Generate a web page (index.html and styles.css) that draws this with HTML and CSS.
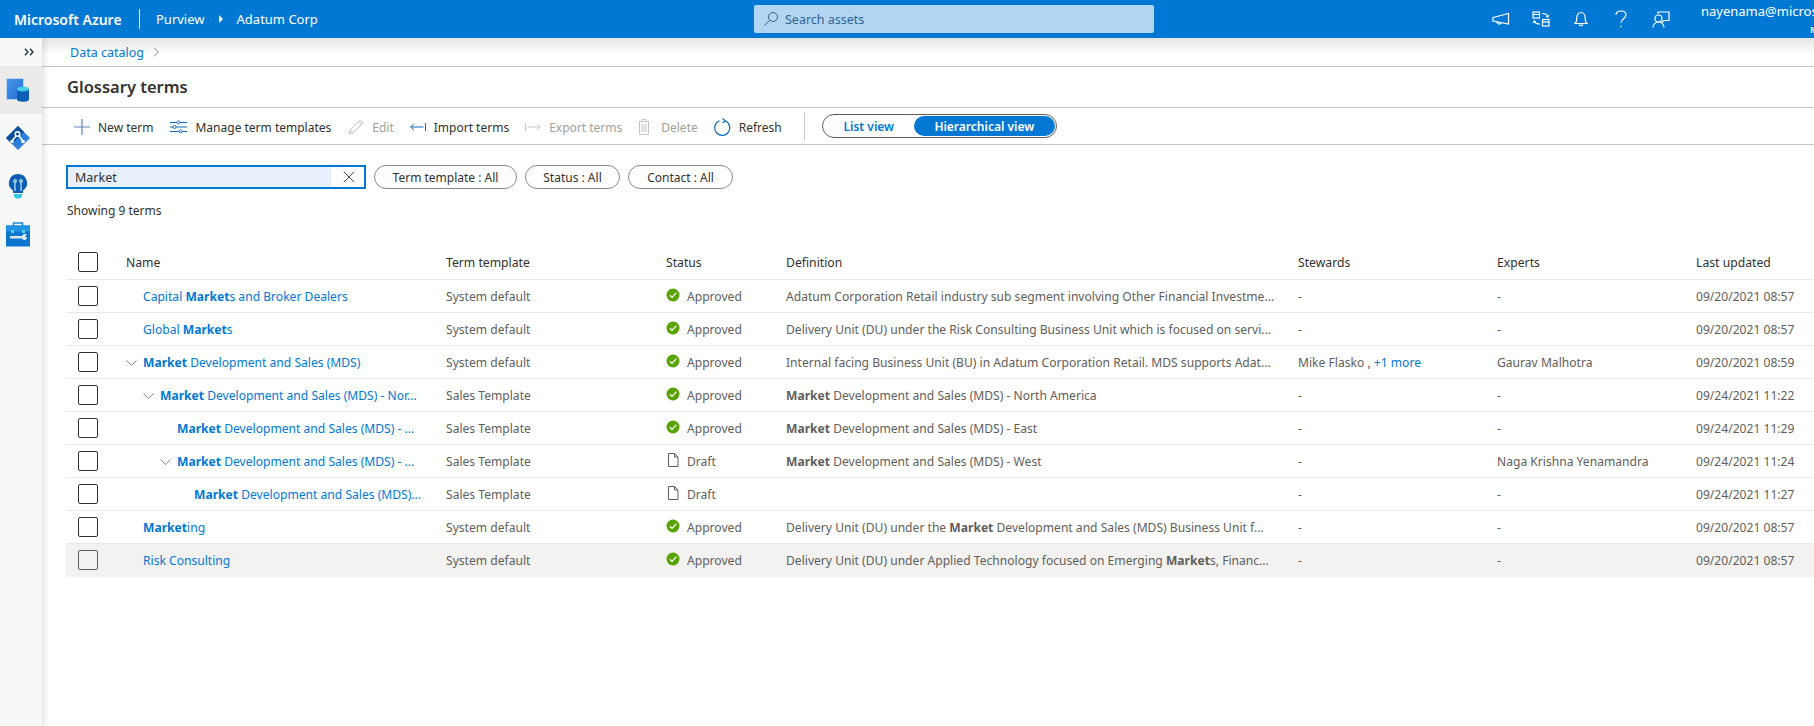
FILE: index.html
```html
<!DOCTYPE html>
<html lang="en">
<head>
<meta charset="utf-8">
<title>Glossary terms</title>
<link rel="stylesheet" href="styles.css">
</head>
<body>
<header class="topbar">
  <div class="top-left">
    <span class="brand">Microsoft Azure</span>
    <span class="brand-sep"></span>
    <span class="top-crumb">Purview</span>
    <svg class="top-caret" width="6" height="10" viewBox="0 0 6 10"><path d="M1 1l4 4-4 4z" fill="#fff"/></svg>
    <span class="top-crumb">Adatum Corp</span>
  </div>
  <div class="top-search">
    <svg width="16" height="16" viewBox="0 0 16 16" fill="none" stroke="#3d5f7d" stroke-width="1"><circle cx="10" cy="6" r="4.5"/><path d="M6.7 9.3L1.5 14.5"/></svg>
    <span>Search assets</span>
  </div>
  <div class="top-right">
    <span class="top-icon"><svg width="18" height="14" viewBox="0 0 18 14" fill="none" stroke="#fff" stroke-width="1.2"><path d="M1 5.5L16.5 1.5V12L1 9z"/><path d="M5 10c0 2 3 3 4 1"/></svg></span>
    <span class="top-icon"><svg width="18" height="16" viewBox="0 0 18 16" fill="none" stroke="#fff" stroke-width="1.2"><rect x="1" y="1" width="6.5" height="6"/><path d="M1 3.5h6.5"/><rect x="10.5" y="8.5" width="6.5" height="6.5"/><path d="M10.5 11h6.5"/><path d="M10 2.5c3 0 5 .5 6 3M14 5.5l2 .6.6-2M8 13c-3 0-5-.5-6-3M4 10.500l-2-.6-.6 2"/></svg></span>
    <span class="top-icon"><svg width="14" height="16" viewBox="0 0 14 16" fill="none" stroke="#fff" stroke-width="1.2"><path d="M1 12.500h12c-1.500-1-1.800-2.500-1.800-5.500 0-3-1.800-5.500-4.200-5.500S2.800 4 2.800 7c0 3-.3 4.500-1.800 5.500z"/><path d="M5.200 13.500c.5 1.500 3.100 1.500 3.600 0"/></svg></span>
    <span class="top-icon"><svg width="12" height="18" viewBox="0 0 12 18" fill="none" stroke="#fff" stroke-width="1.2"><path d="M1 5c0-2.500 2-4 5-4s5 1.600 5 4c0 3.500-5 3.500-5 8"/><circle cx="6" cy="16.500" r=".8" fill="#fff" stroke="none"/></svg></span>
    <span class="top-icon"><svg width="18" height="17" viewBox="0 0 18 17" fill="none" stroke="#fff" stroke-width="1.2"><path d="M6 3V1h11v8.500h-5l-2 2"/><circle cx="6.500" cy="7.500" r="3.500"/><path d="M1 16.500c0-3 2.500-5.500 5.500-5.500s5.500 2.500 5.500 5.500"/></svg></span>
    <div class="user">
      <div class="user-name">nayenama@microsoft.com</div>
      <div class="user-org">MICROSOFT</div>
    </div>
  </div>
</header>
<div class="shell">
  <nav class="sidebar">
    <div class="expand"><svg width="10" height="8" viewBox="0 0 10 8" fill="none" stroke="#1c2b3a" stroke-width="1.3"><path d="M1 .7L4 4 1 7.300M6 .7L9 4 6 7.300"/></svg></div>
    <div class="nav-item nav-active">
      <svg width="24" height="24" viewBox="0 0 24 24"><defs><linearGradient id="bookfill" x1="0" y1="0" x2="1" y2="1"><stop offset="0" stop-color="#4a97ea"/><stop offset="1" stop-color="#1f6fd1"/></linearGradient></defs><rect x="0.500" y="0.500" width="17" height="21" fill="url(#bookfill)" stroke="#b9d5f2"/><path d="M11 11h12v10.500c0 3-12 3-12 0z" fill="#0c5fb5"/><ellipse cx="17" cy="11" rx="6" ry="2.500" fill="#43cfe8"/></svg>
    </div>
    <div class="nav-item">
      <svg width="24" height="24" viewBox="0 0 24 24"><path d="M12 0l12 12-12 12L0 12z" fill="#2d7fdc"/><path d="M12 0L0 12l6 6L18 6z" fill="#0f4f97"/><g fill="none" stroke="#fff" stroke-width="1.500"><circle cx="11.500" cy="8" r="2.300"/><path d="M10 10l-4 5M13 10l4 5"/></g><circle cx="6" cy="15.500" r="1.800" fill="#fff"/><circle cx="17" cy="15.500" r="1.800" fill="#fff"/></svg>
    </div>
    <div class="nav-item">
      <svg width="20" height="25" viewBox="0 0 20 25"><path d="M10 0a9 9 0 0 1 5 16.500V19H5v-2.500A9 9 0 0 1 10 0z" fill="#0c5fb5"/><path d="M6 20h8v2.500l-2 2H8l-2-2z" fill="#32c8e8"/><g stroke="#bfe6f7" stroke-width="1.200" fill="none"><path d="M7 8v9M13 8v9"/><circle cx="7" cy="7" r="1.300"/><circle cx="13" cy="7" r="1.300"/></g></svg>
    </div>
    <div class="nav-item">
      <svg width="24" height="25" viewBox="0 0 24 25"><path d="M7.500 4V1h9v3" fill="none" stroke="#1d86d8" stroke-width="1.600"/><rect y="3.500" width="24" height="21" fill="#0c76cf"/><rect y="3.500" width="24" height="6" fill="#1f93e0"/><rect x="5" y="8" width="3" height="3" fill="#4fd0ec"/><rect x="16" y="8" width="3" height="3" fill="#4fd0ec"/><path d="M4 14h12l1.500-2H21l-1.500 2 1.500 2-1.500 2h-2L16 16.500H4z" fill="#dfe7ee"/></svg>
    </div>
  </nav>
  <main class="main">
    <div class="crumbs"><a class="crumb-link">Data catalog</a><svg width="7" height="10" viewBox="0 0 7 10" fill="none" stroke="#8a8886"><path d="M1 .7L5.500 5 1 9.300"/></svg></div>
    <h1 class="page-title">Glossary terms</h1>
    <div class="toolbar">
      <button class="tool tool-wide"><svg width="16" height="16" viewBox="0 0 16 16" stroke="#5f83c4" stroke-width="1.200"><path d="M8 0v16M0 8h16"/></svg>New term</button>
      <button class="tool tool-wide"><svg width="17" height="14" viewBox="0 0 17 14" fill="none" stroke="#0f6cbd"><path d="M0 2.500h7M10 2.500h7M0 7h3M6 7h11M0 11.500h9M12 11.500h5"/><circle cx="8.500" cy="2.500" r="1.500"/><circle cx="4.500" cy="7" r="1.500"/><circle cx="10.500" cy="11.500" r="1.500"/></svg>Manage term templates</button>
      <button class="tool tool-off"><svg width="16" height="16" viewBox="0 0 16 16" fill="none" stroke="#c8c6c4"><path d="M1 15l1-4L12 1l3 3L5 14zM10.500 2.500l3 3M2 11l3 3"/></svg>Edit</button>
      <button class="tool"><svg width="16" height="8" viewBox="0 0 16 8" fill="none" stroke="#0f6cbd"><path d="M.5 4h13M4 .7L.7 4 4 7.300M15.500 0v8"/></svg>Import terms</button>
      <button class="tool tool-off"><svg width="16" height="8" viewBox="0 0 16 8" fill="none" stroke="#c8c6c4"><path d="M2.500 4h13M12 .7L15.300 4 12 7.300M.5 0v8"/></svg>Export terms</button>
      <button class="tool tool-off tool-delete"><svg width="12" height="16" viewBox="0 0 12 16" fill="none" stroke="#c8c6c4"><path d="M.5 2.500h11M4 2.500V.5h4v2M1.500 2.500v13h9v-13M4 5v8M6 5v8M8 5v8"/></svg>Delete</button>
      <button class="tool"><svg width="17" height="18" viewBox="0 0 17 18" fill="none" stroke="#0f6cbd" stroke-width="1.200"><path d="M11 2.800a7.500 7.500 0 1 1-5.500 0"/><path d="M8.500 .5L11.300 2.900 8.500 5"/></svg>Refresh</button>
      <span class="tool-sep"></span>
      <div class="view-toggle">
        <span class="view view-list">List view</span>
        <span class="view view-on">Hierarchical view</span>
      </div>
    </div>
    <div class="filters">
      <div class="searchbox"><span class="search-text">Market</span><svg width="12" height="12" viewBox="0 0 12 12" stroke="#4a4846"><path d="M.7.7l10.600 10.600M11.300.7L.7 11.300"/></svg></div>
      <button class="chip chip-term">Term template : All</button>
      <button class="chip chip-status">Status : All</button>
      <button class="chip chip-contact">Contact : All</button>
    </div>
    <p class="count">Showing 9 terms</p>
    <table class="grid">
      <colgroup><col class="c-check"><col class="c-name"><col class="c-tmpl"><col class="c-stat"><col class="c-def"><col class="c-stew"><col class="c-exp"><col class="c-upd"></colgroup>
      <thead>
        <tr><th><span class="box"></span></th><th>Name</th><th>Term template</th><th>Status</th><th>Definition</th><th>Stewards</th><th>Experts</th><th>Last updated</th></tr>
      </thead>
      <tbody>
        <tr><td><span class="box"></span></td><td><div class="tree"><span class="twist"></span><a class="term">Capital <b>Market</b>s and Broker Dealers</a></div></td><td>System default</td><td><div class="status"><svg class="st-icon" width="14" height="14" viewBox="0 0 14 14"><circle cx="7" cy="7" r="6.500" fill="#57a300"/><path d="M3.800 7.200l2.200 2.200 4.300-4.600" fill="none" stroke="#fff" stroke-width="1.300"/></svg>Approved</div></td><td>Adatum Corporation Retail industry sub segment involving Other Financial Investme...</td><td>-</td><td>-</td><td>09/20/2021 08:57</td></tr>
        <tr><td><span class="box"></span></td><td><div class="tree"><span class="twist"></span><a class="term">Global <b>Market</b>s</a></div></td><td>System default</td><td><div class="status"><svg class="st-icon" width="14" height="14" viewBox="0 0 14 14"><circle cx="7" cy="7" r="6.500" fill="#57a300"/><path d="M3.800 7.200l2.200 2.200 4.300-4.600" fill="none" stroke="#fff" stroke-width="1.300"/></svg>Approved</div></td><td>Delivery Unit (DU) under the Risk Consulting Business Unit which is focused on servi...</td><td>-</td><td>-</td><td>09/20/2021 08:57</td></tr>
        <tr><td><span class="box"></span></td><td><div class="tree"><span class="twist"><svg width="11" height="6" viewBox="0 0 11 6" fill="none" stroke="#8a8886"><path d="M.5.500l5 5 5-5"/></svg></span><a class="term"><b>Market</b> Development and Sales (MDS)</a></div></td><td>System default</td><td><div class="status"><svg class="st-icon" width="14" height="14" viewBox="0 0 14 14"><circle cx="7" cy="7" r="6.500" fill="#57a300"/><path d="M3.800 7.200l2.200 2.200 4.300-4.600" fill="none" stroke="#fff" stroke-width="1.300"/></svg>Approved</div></td><td>Internal facing Business Unit (BU) in Adatum Corporation Retail. MDS supports Adat...</td><td>Mike Flasko , <a class="more">+1 more</a></td><td>Gaurav Malhotra</td><td>09/20/2021 08:59</td></tr>
        <tr><td><span class="box"></span></td><td><div class="tree lvl1"><span class="twist"><svg width="11" height="6" viewBox="0 0 11 6" fill="none" stroke="#8a8886"><path d="M.5.500l5 5 5-5"/></svg></span><a class="term"><b>Market</b> Development and Sales (MDS) - Nor...</a></div></td><td>Sales Template</td><td><div class="status"><svg class="st-icon" width="14" height="14" viewBox="0 0 14 14"><circle cx="7" cy="7" r="6.500" fill="#57a300"/><path d="M3.800 7.200l2.200 2.200 4.300-4.600" fill="none" stroke="#fff" stroke-width="1.300"/></svg>Approved</div></td><td><b>Market</b> Development and Sales (MDS) - North America</td><td>-</td><td>-</td><td>09/24/2021 11:22</td></tr>
        <tr><td><span class="box"></span></td><td><div class="tree lvl2"><span class="twist"></span><a class="term"><b>Market</b> Development and Sales (MDS) - ...</a></div></td><td>Sales Template</td><td><div class="status"><svg class="st-icon" width="14" height="14" viewBox="0 0 14 14"><circle cx="7" cy="7" r="6.500" fill="#57a300"/><path d="M3.800 7.200l2.200 2.200 4.300-4.600" fill="none" stroke="#fff" stroke-width="1.300"/></svg>Approved</div></td><td><b>Market</b> Development and Sales (MDS) - East</td><td>-</td><td>-</td><td>09/24/2021 11:29</td></tr>
        <tr><td><span class="box"></span></td><td><div class="tree lvl2"><span class="twist"><svg width="11" height="6" viewBox="0 0 11 6" fill="none" stroke="#8a8886"><path d="M.5.500l5 5 5-5"/></svg></span><a class="term"><b>Market</b> Development and Sales (MDS) - ...</a></div></td><td>Sales Template</td><td><div class="status"><svg class="st-icon" width="14" height="14" viewBox="0 0 14 14" fill="none" stroke="#605e5c"><path d="M2.500 .5h6l3.500 3.500v9.500h-9.500zM8.500 .5V4H12"/></svg>Draft</div></td><td><b>Market</b> Development and Sales (MDS) - West</td><td>-</td><td>Naga Krishna Yenamandra</td><td>09/24/2021 11:24</td></tr>
        <tr><td><span class="box"></span></td><td><div class="tree lvl3"><span class="twist"></span><a class="term"><b>Market</b> Development and Sales (MDS)...</a></div></td><td>Sales Template</td><td><div class="status"><svg class="st-icon" width="14" height="14" viewBox="0 0 14 14" fill="none" stroke="#605e5c"><path d="M2.500 .5h6l3.500 3.500v9.500h-9.500zM8.500 .5V4H12"/></svg>Draft</div></td><td></td><td>-</td><td>-</td><td>09/24/2021 11:27</td></tr>
        <tr><td><span class="box"></span></td><td><div class="tree"><span class="twist"></span><a class="term"><b>Market</b>ing</a></div></td><td>System default</td><td><div class="status"><svg class="st-icon" width="14" height="14" viewBox="0 0 14 14"><circle cx="7" cy="7" r="6.500" fill="#57a300"/><path d="M3.800 7.200l2.200 2.200 4.300-4.600" fill="none" stroke="#fff" stroke-width="1.300"/></svg>Approved</div></td><td>Delivery Unit (DU) under the <b>Market</b> Development and Sales (MDS) Business Unit f...</td><td>-</td><td>-</td><td>09/20/2021 08:57</td></tr>
        <tr class="row-hover"><td><span class="box"></span></td><td><div class="tree"><span class="twist"></span><a class="term">Risk Consulting</a></div></td><td>System default</td><td><div class="status"><svg class="st-icon" width="14" height="14" viewBox="0 0 14 14"><circle cx="7" cy="7" r="6.500" fill="#57a300"/><path d="M3.800 7.200l2.200 2.200 4.300-4.600" fill="none" stroke="#fff" stroke-width="1.300"/></svg>Approved</div></td><td>Delivery Unit (DU) under Applied Technology focused on Emerging <b>Market</b>s, Financ...</td><td>-</td><td>-</td><td>09/20/2021 08:57</td></tr>
      </tbody>
    </table>
  </main>
</div>
</body>
</html>
```
FILE: styles.css
```css
* { box-sizing: border-box; }
html, body { margin: 0; height: 100%; overflow: hidden; }
body { font-family: "Noto Sans", "Open Sans", sans-serif; font-size: 12px; color: #323130; background: #fff; width: 1814px; height: 726px; display: flex; flex-direction: column; }

.topbar { flex: 0 0 38px; background: #0078d4; color: #fff; display: flex; align-items: center; position: relative; z-index: 2; }
.top-left { flex: 0 0 754px; display: flex; align-items: center; padding-left: 14px; }
.brand { font-size: 14px; font-weight: 600; width: 108px; white-space: nowrap; }
.brand-sep { width: 1px; height: 20px; background: #fff; margin: 0 16px 0 17px; }
.top-crumb { font-size: 13px; white-space: nowrap; }
.top-caret { margin: 0 13px; }
.top-search { flex: 0 0 400px; height: 28px; border-radius: 2px; background: #b2d6f2; display: flex; align-items: center; gap: 6px; padding-left: 9px; color: #2f6392; font-size: 12.500px; }
.top-right { margin-left: auto; flex: 0 0 333px; display: flex; align-items: center; height: 38px; overflow: hidden; }
.top-icon { flex: 0 0 40px; display: flex; justify-content: center; }
.user { flex: 0 0 113px; align-self: stretch; margin-left: 20px; overflow: hidden; white-space: nowrap; }
.user-name { font-size: 13px; line-height: 16px; margin-top: 3px; }
.user-org { font-size: 9px; font-weight: 700; line-height: 12px; margin-top: 5px; padding-left: 109px; color: #dcecf9; }

.shell { flex: 1; display: flex; min-height: 0; }
.sidebar { flex: 0 0 42px; background: #f8f8f8; box-shadow: 2px 0 6px rgba(0,0,0,.13); display: flex; flex-direction: column; position: relative; z-index: 1; }
.expand { height: 28px; display: flex; align-items: center; justify-content: flex-end; padding: 0 8px 0 0; }
.nav-item { height: 48px; padding-right: 6px; display: flex; align-items: center; justify-content: center; }
.nav-active { background: #edebe9; }

.main { flex: 1; min-width: 0; overflow: hidden; }
.crumbs { height: 29px; padding-left: 28px; display: flex; align-items: center; gap: 9px; border-bottom: 1px solid #c8c6c4; background: linear-gradient(#e4e4e4, #fff 60%); }
.crumb-link { color: #0078d4; font-size: 12.500px; }
.page-title { margin: 0; height: 41px; padding-left: 25px; font-size: 16.500px; font-weight: 600; line-height: 40px; color: #323130; border-bottom: 1px solid #c8c6c4; }
.toolbar { height: 37px; padding: 2px 0 0 32px; display: flex; align-items: center; border-bottom: 1px solid #c8c6c4; }
.tool { border: 0; background: none; padding: 0; margin-right: 16px; font: inherit; font-size: 12px; color: #323130; display: flex; align-items: center; gap: 8px; white-space: nowrap; }
.tool-wide { margin-right: 17px; }
.tool-delete { gap: 11px; }
.tool-off { color: #a19f9d; }
.tool-sep { width: 1px; height: 28px; background: #c8c6c4; margin: -2px 17px 0 6px; }
.view-toggle { width: 235px; height: 24px; margin-top: -2px; border: 1px solid #605e5c; border-radius: 12px; padding: 1px; display: flex; align-items: center; font-size: 12px; font-weight: 600; }
.view { display: flex; align-items: center; justify-content: center; height: 100%; }
.view-list { flex: 1; color: #0078d4; }
.view-on { flex: 0 0 141px; background: #0078d4; color: #fff; border-radius: 10px; }

.filters { padding: 20px 0 0 24px; display: flex; align-items: center; gap: 8px; }
.searchbox { width: 300px; height: 24px; border: 2px solid #0078d4; display: flex; align-items: center; justify-content: space-between; padding: 0 9px 0 0; }
.search-text { flex: 0 0 263px; height: 20px; line-height: 22px; padding-left: 7px; background: #e8f0fb; color: #323130; font-size: 12.500px; }
.chip { height: 24px; border: 1px solid #8a8886; border-radius: 12px; background: #fff; font: inherit; font-size: 12px; color: #323130; padding: 1px 0 0; white-space: nowrap; }
.chip-term { width: 143px; }
.chip-status { width: 95px; }
.chip-contact { width: 105px; }
.count { margin: 14px 0 0 25px; height: 16px; line-height: 16px; font-size: 12px; color: #323130; }

.grid { margin: 26px 0 0 24px; width: 1790px; table-layout: fixed; border-collapse: collapse; font-size: 12.100px; white-space: nowrap; }
.c-check { width: 60px; } .c-name { width: 320px; } .c-tmpl { width: 220px; } .c-stat { width: 120px; } .c-def { width: 512px; } .c-stew { width: 199px; } .c-exp { width: 199px; } .c-upd { width: 160px; }
.grid th { height: 34px; padding: 2px 0 0; text-align: left; font-weight: 400; font-size: 12.200px; color: #323130; border-bottom: 1px solid #edebe9; }
.grid td { height: 33px; padding: 2px 0 0; color: #605e5c; border-bottom: 1px solid #edebe9; }
.grid th:first-child, .grid td:first-child { padding: 0 0 0 12px; }
.grid .row-hover td { background: #f3f2f1; border-bottom: 0; height: 34px; padding-top: 0; }
.box { display: block; width: 20px; height: 20px; border: 1px solid #323130; border-radius: 2px; background: #fff; }
.row-hover .box { background: transparent; border-color: #605e5c; }
.tree { display: flex; align-items: center; }
.lvl1 { padding-left: 17px; } .lvl2 { padding-left: 34px; } .lvl3 { padding-left: 51px; }
.twist { flex: 0 0 17px; display: flex; align-items: center; }
.term, .more { color: #0078d4; }
td b { font-weight: 700; }
.status { display: flex; align-items: center; gap: 7px; }
.st-icon { flex: none; margin-top: -3px; }
```
